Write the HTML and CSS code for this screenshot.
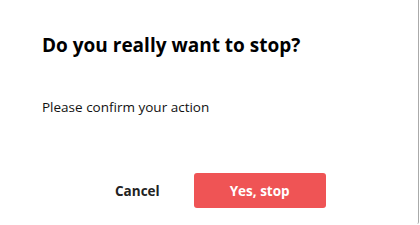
FILE: index.html
```html
<!DOCTYPE html>
<html lang="en">

<head>
    <meta charset="UTF-8">
    <meta name="viewport" content="width=device-width, initial-scale=1.0">
    <title>Confirm stop</title>
    <link rel="stylesheet" href="styles.css">
</head>

<body>
    <div class="dialog">
        <h2 class="dialog-title">Do you really want to stop?</h2>
        <p class="dialog-text">Please confirm your action</p>
        <div class="dialog-actions">
            <button class="btn btn-cancel">Cancel</button>
            <button class="btn btn-danger">Yes, stop</button>
        </div>
    </div>
</body>

</html>
```

FILE: styles.css
```css
* {
    margin: 0;
    padding: 0;
    box-sizing: border-box;
}

body {
    font-family: 'Open Sans', 'Noto Sans', sans-serif;
    background: #fff;
    color: #111;
}

.dialog {
    width: 419px;
    height: 224px;
    padding: 33px 42px 0;
    background: #fff;
    border-right: 1px solid #aaa;
    border-bottom-right-radius: 2px;
}

.dialog-title {
    font-size: 19px;
    line-height: 24px;
    font-weight: 700;
    color: #000;
}

.dialog-text {
    margin-top: 41px;
    font-size: 13.5px;
    line-height: 18px;
    color: #111;
}

.dialog-actions {
    display: flex;
    align-items: center;
    gap: 10px;
    margin-top: 57px;
    margin-left: 49px;
}

.btn {
    font-family: inherit;
    font-size: 13.5px;
    font-weight: 700;
    height: 35px;
    border: none;
    border-radius: 3px;
    cursor: pointer;
}

.btn-cancel {
    background: transparent;
    color: #222;
    padding: 0 24px;
}

.btn-danger {
    width: 132px;
    background: #ef5455;
    color: #fff;
}
```
